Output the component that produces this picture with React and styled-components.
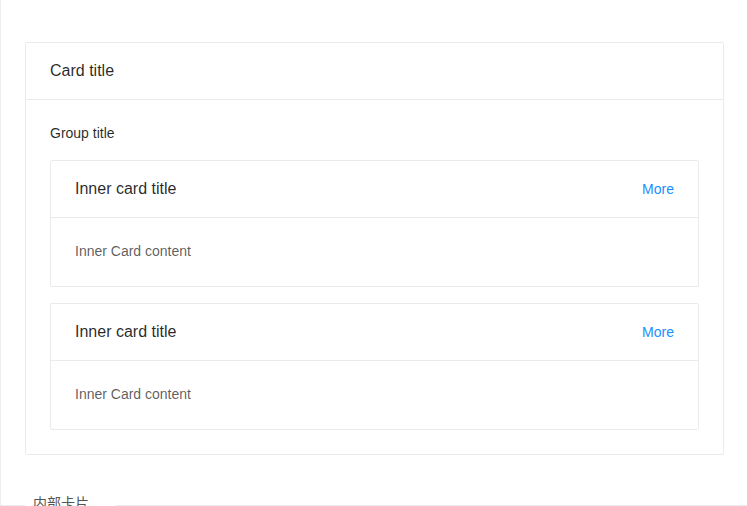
import React from "react";
import styled, { createGlobalStyle } from "styled-components";

const GlobalStyle = createGlobalStyle`
  html, body {
    margin: 0;
    padding: 0;
    background: #ffffff;
    overflow: hidden;
  }
  body {
    font-family: "Liberation Sans", Arial, "Noto Sans CJK SC", sans-serif;
    font-size: 14px;
    color: rgba(0, 0, 0, 0.85);
  }
`;

const CodeBox = styled.section`
  box-sizing: border-box;
  width: 749px;
  margin-top: -1px;
  border: 1px solid #ebedf0;
  border-bottom: none;
`;

const Demo = styled.div`
  padding: 42px 24px 50px;
`;

const Meta = styled.div`
  position: relative;
  border-top: 1px solid #ebedf0;
  height: 40px;
`;

const MetaTitle = styled.div`
  position: absolute;
  top: -14px;
  left: 24px;
  padding: 0 27px 0 8px;
  background: #ffffff;
  font-family: "Liberation Sans", "Noto Sans CJK SC", sans-serif;
  font-size: 14px;
  line-height: 22px;
  color: #555555;
`;

const Card = styled.div`
  box-sizing: border-box;
  background: #ffffff;
  border: 1px solid #ebebeb;
  border-radius: 2px;
  margin-top: ${(p) => (p.$spaced ? "16px" : "0")};
`;

const Head = styled.div`
  display: flex;
  align-items: center;
  justify-content: space-between;
  height: 56px;
  padding: 0 24px;
  border-bottom: 1px solid #ebebeb;
`;

const Title = styled.div`
  font-size: 16px;
  line-height: 24px;
  color: rgba(0, 0, 0, 0.85);
`;

const Extra = styled.a`
  font-size: 14px;
  line-height: 22px;
  color: #1890ff;
  text-decoration: none;
  cursor: pointer;
`;

const Body = styled.div`
  padding: ${(p) => (p.$inner ? "23px 24px 25px" : "24px")};
`;

const GroupTitle = styled.p`
  margin: -1px 0 17px;
  font-size: 14px;
  line-height: 20px;
  color: rgba(0, 0, 0, 0.85);
`;

const Content = styled.p`
  margin: 0;
  font-size: 14px;
  line-height: 20px;
  color: rgba(0, 0, 0, 0.65);
`;

const InnerCard = ({ spaced }) => (
  <Card $spaced={spaced}>
    <Head>
      <Title>Inner card title</Title>
      <Extra>More</Extra>
    </Head>
    <Body $inner>
      <Content>Inner Card content</Content>
    </Body>
  </Card>
);

export default function App() {
  return (
    <>
      <GlobalStyle />
      <CodeBox>
        <Demo>
          <Card>
            <Head>
              <Title>Card title</Title>
            </Head>
            <Body>
              <GroupTitle>Group title</GroupTitle>
              <InnerCard />
              <InnerCard spaced />
            </Body>
          </Card>
        </Demo>
        <Meta>
          <MetaTitle>内部卡片</MetaTitle>
        </Meta>
      </CodeBox>
    </>
  );
}
